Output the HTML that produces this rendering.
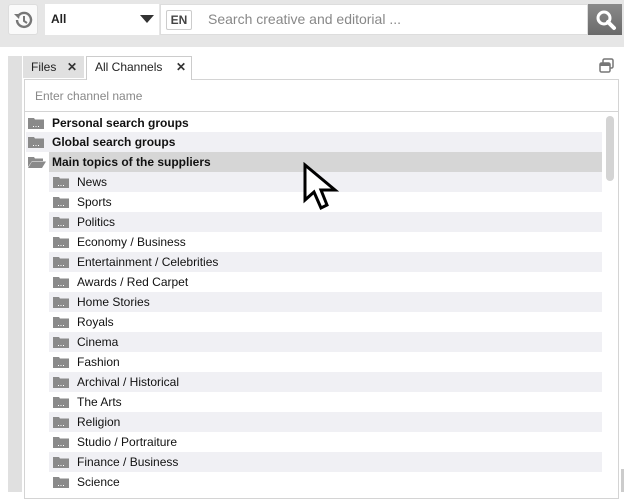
<!DOCTYPE html>
<html><head><meta charset="utf-8"><style>
*{margin:0;padding:0;box-sizing:border-box}
body{width:624px;height:492px;overflow:hidden;background:#fff;font-family:"Liberation Sans",Arial,sans-serif;position:relative}
.abs{position:absolute}
.top{left:0;top:0;width:624px;height:47px;background:#e6e6e6}
.row{position:absolute;height:20px;font-size:12px;line-height:21px;color:#111}
.row.b{font-weight:bold}
.fi{position:absolute;top:4px;width:16px;height:12px}
.lt{background:#f0f0f4}
</style></head><body>
<div class="abs top"></div>
<div class="abs" style="left:8px;top:4px;width:30px;height:31px;background:#fafafa;border:1px solid #ddd;border-radius:3px"></div>
<svg class="abs" style="left:12px;top:9px" width="22" height="22" viewBox="0 0 22 22"><path d="M5 11a7 7 0 1 0 2-5" fill="none" stroke="#777" stroke-width="2.4"/><path d="M2 5l6 0l-1 5z" fill="#777"/><path d="M12 7v5l3 2" fill="none" stroke="#777" stroke-width="2"/></svg>
<div class="abs" style="left:45px;top:4px;width:114px;height:31px;background:#fff;font-size:12px;font-weight:bold;line-height:31px;padding-left:6px;color:#222">All</div>
<svg class="abs" style="left:140px;top:15px" width="14" height="8"><path d="M0 0h14L7 8z" fill="#333"/></svg>
<div class="abs" style="left:160px;top:4px;width:428px;height:31px;background:#fff;border:1px solid #ddd"></div>
<div class="abs" style="left:166px;top:10px;width:26px;height:20px;border:1px solid #ccc;border-radius:2px;font-size:12px;font-weight:bold;line-height:18px;text-align:center;color:#444;background:#fff">EN</div>
<div class="abs" style="left:208px;top:4px;height:31px;line-height:31px;font-size:14px;color:#888">Search creative and editorial ...</div>
<div class="abs" style="left:588px;top:4px;width:34px;height:31px;background:linear-gradient(#8a8a8a,#6a6a6a)"></div>
<svg class="abs" style="left:594px;top:8px" width="24" height="24"><circle cx="10" cy="10" r="6" fill="none" stroke="#fff" stroke-width="3"/><path d="M14 14l6 6" stroke="#fff" stroke-width="4" stroke-linecap="round"/></svg>
<div class="abs" style="left:8px;top:56px;width:14px;height:436px;background:#e0e0e0"></div>
<div class="abs" style="left:23px;top:56px;width:61px;height:22px;background:#e0e0e0;font-size:12px;line-height:22px;padding-left:8px;color:#222">Files<span style="position:absolute;left:44px;font-weight:bold;color:#333">✕</span></div>
<div class="abs" style="left:86px;top:56px;width:106px;height:24px;background:#fff;border:1px solid #ccc;border-bottom:none;font-size:12px;line-height:21px;padding-left:8px;color:#222;z-index:2">All Channels<span style="position:absolute;left:89px;font-weight:bold;color:#333">✕</span></div>
<svg class="abs" style="left:599px;top:58px" width="16" height="16"><rect x="4" y="1" width="10" height="9" rx="1.5" fill="none" stroke="#777" stroke-width="1.5"/><rect x="1" y="5" width="10" height="9" rx="1.5" fill="#fff" stroke="#777" stroke-width="1.5"/><rect x="1" y="5" width="10" height="3" fill="#777"/></svg>
<div class="abs" style="left:24px;top:79px;width:595px;height:420px;border:1px solid #d4d4d4"></div>
<div class="abs" style="left:24px;top:79px;width:595px;height:33px;border:1px solid #d4d4d4;font-size:12px;line-height:33px;padding-left:10px;color:#888">Enter channel name</div>
<div class="abs" style="left:606px;top:116px;width:8px;height:65px;border-radius:4px;background:#d4d4d4"></div>
<div class="abs" style="left:621px;top:469px;width:3px;height:23px;background:#ccc"></div>
<div id="tree"></div>
<svg class="abs" style="left:302px;top:162px" width="40" height="52" viewBox="0 0 40 52"><path d="M3 3L3 38L12 30L19 46L25 43L19 28L33 28Z" fill="#fff" stroke="#000" stroke-width="3" stroke-linejoin="miter"/></svg>
<script>
const f='<svg class="fi" viewBox="0 0 16 12"><path d="M0 1h6l1 1.5h9V12H0z" fill="#8a8a8a"/><path d="M5 9.5h1M7.5 9.5h1M10 9.5h1" stroke="#fff" stroke-width="1"/></svg>';
const fo='<svg class="fi" viewBox="0 0 18 12"><path d="M0 1h6l1 1.5h8V5H4L0 11z" fill="#8a8a8a"/><path d="M4 5.5h14L14 12H0z" fill="#8a8a8a"/></svg>';
let h='';
h+=`<div class="row b" style="left:26px;top:113px;width:576px">${f.replace('fi"','fi" style="left:2px"')}<span style="position:absolute;left:26px">Personal search groups</span></div>`;
h+=`<div class="row b lt" style="left:26px;top:132px;width:576px">${f.replace('fi"','fi" style="left:2px"')}<span style="position:absolute;left:26px">Global search groups</span></div>`;
h+=`<div class="row b" style="left:26px;top:152px;width:576px">${fo.replace('fi"','fi" style="left:2px;width:18px"')}</div>`;
h+=`<div class="row b" style="left:49px;top:152px;width:553px;background:#d6d6d6"><span style="position:absolute;left:3px">Main topics of the suppliers</span></div>`;
const items=["News","Sports","Politics","Economy / Business","Entertainment / Celebrities","Awards / Red Carpet","Home Stories","Royals","Cinema","Fashion","Archival / Historical","The Arts","Religion","Studio / Portraiture","Finance / Business","Science"];
items.forEach((t,i)=>{h+=`<div class="row ${i%2==0?'lt':''}" style="left:49px;top:${172+i*20}px;width:553px">${f.replace('fi"','fi" style="left:4px"')}<span style="position:absolute;left:28px">${t}</span></div>`;});
document.getElementById('tree').innerHTML=h;
</script>
</body></html>
